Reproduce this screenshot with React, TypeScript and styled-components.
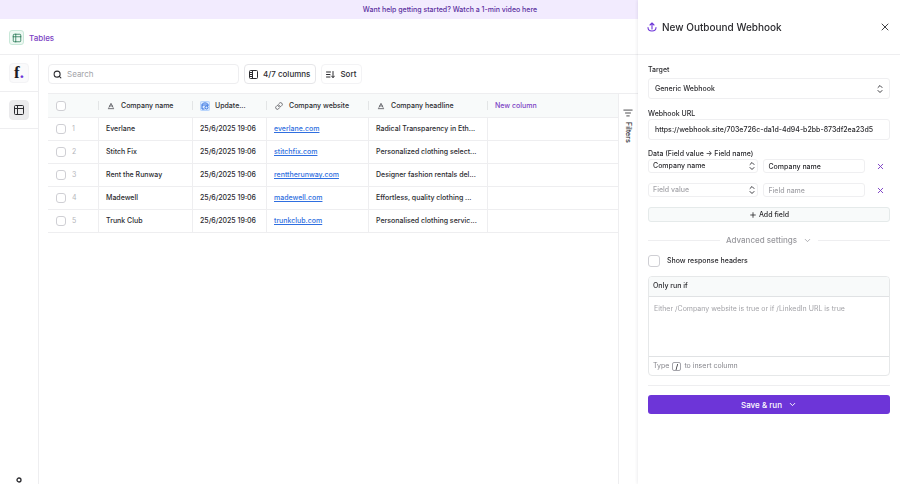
import React, { useState } from "react";
import styled, { createGlobalStyle, css } from "styled-components";
import {
  Baseline,
  ChevronDown,
  Link,
  ListFilter,
  Plus,
  Search,
  Table2,
  X,
} from "lucide-react";

const color = {
  text: "#2b2b2f",
  muted: "#a3a3a8",
  line: "#eeeef0",
  field: "#efeff1",
  tint: "#f8fafa",
  purple: "#7c3fc4",
  brand: "#6d35d8",
  link: "#2f6fe0",
};

const DRAWER = "262px";

const GlobalStyle = createGlobalStyle`
  *, *::before, *::after { box-sizing: border-box; }
  body {
    margin: 0;
    background: #fff;
    color: ${color.text};
    font: 500 7px/10px Inter, "Liberation Sans", sans-serif;
  }
  button, input, select, textarea { font: inherit; color: inherit; margin: 0; }
  button { cursor: pointer; }
  svg { display: block; flex: none; }
`;

const Page = styled.div`
  display: flex;
  flex-direction: column;
  min-height: 100vh;
`;

const Banner = styled.a`
  display: flex;
  align-items: center;
  justify-content: center;
  height: 19px;
  background: #f2ebfe;
  color: #5b2f9e;
  text-decoration: none;
`;

const TopBar = styled.header`
  display: flex;
  align-items: center;
  gap: 5px;
  height: 36px;
  padding: 2px 9px 0;
  border-bottom: 1px solid ${color.line};
`;

const TopTitle = styled.h1`
  margin: 0;
  color: ${color.purple};
  font-size: 8px;
  font-weight: 500;
`;

const GreenBadge = styled.span`
  display: grid;
  place-items: center;
  width: 15px;
  height: 15px;
  border: 1px solid #c9e8d9;
  border-radius: 3px;
  background: #eef9f3;
  color: #2f7d5b;
`;

const Body = styled.div`
  display: flex;
  flex: 1;
  padding-right: ${DRAWER};
`;

const Rail = styled.nav`
  display: flex;
  flex-direction: column;
  flex: none;
  width: 39px;
  border-right: 1px solid ${color.line};
`;

const RailCell = styled.div`
  display: flex;
  align-items: center;
  height: 37px;
  padding-left: 9px;
  border-bottom: 1px solid ${color.line};
`;

const RailButton = styled.button<{ $active?: boolean }>`
  display: grid;
  place-items: center;
  width: 20px;
  height: 20px;
  padding: 0;
  border: 1px solid ${(p) => (p.$active ? "#eaeaec" : "#f3f3f5")};
  border-radius: 4px;
  background: ${(p) => (p.$active ? "#ebebed" : "#fafafb")};
`;

const Logo = styled.span`
  font: 700 17px/16px "Liberation Serif", serif;
  color: #1c1c1f;
  b { color: ${color.brand}; }
`;

const RailFoot = styled.div`
  height: 8px;
  margin-top: auto;
  padding-left: 15px;
  overflow: hidden;
`;

const Main = styled.main`
  flex: 1;
  min-width: 0;
  display: flex;
  flex-direction: column;
  padding: 9px 0 0 9px;
`;

const Toolbar = styled.div`
  display: flex;
  gap: 5px;
  padding-bottom: 9px;
`;

const SearchBox = styled.label`
  display: flex;
  align-items: center;
  gap: 5px;
  width: 191px;
  height: 20px;
  padding: 0 4px;
  border: 1px solid ${color.line};
  border-radius: 4px;
  input {
    flex: 1;
    min-width: 0;
    padding: 0;
    border: 0;
    outline: 0;
    background: none;
    font-size: 8px;
    font-weight: 400;
  }
  input::placeholder { color: ${color.muted}; opacity: 1; }
`;

const ToolButton = styled.button<{ $faint?: boolean }>`
  display: flex;
  align-items: center;
  gap: 5px;
  height: 20px;
  padding: 0 5px 0 4px;
  border: 1px solid ${(p) => (p.$faint ? "#f3f3f5" : "#e6e6e9")};
  border-radius: 4px;
  background: #fff;
  font-size: 8px;
`;

const Workspace = styled.div`
  display: flex;
  flex: 1;
  border-top: 1px solid ${color.line};
`;

const TablePane = styled.div`
  flex: 1;
  min-width: 0;
`;

const Grid = styled.table`
  width: 100%;
  table-layout: fixed;
  border-collapse: separate;
  border-spacing: 0;
  th, td {
    border-bottom: 1px solid ${color.line};
    text-align: left;
    font-weight: 500;
    white-space: nowrap;
  }
  th { height: 24px; padding: 0 8px; background-color: ${color.tint}; }
  td { height: 23px; padding: 0 7px; }
  td:first-child { padding-left: 8px; }
  td + td { border-left: 1px solid ${color.line}; }
`;

const HeadDivided = styled.th`
  background-image: linear-gradient(#e3e5e6, #e3e5e6);
  background-size: 1px 9px;
  background-position: left center;
  background-repeat: no-repeat;
`;

const HeadCell = styled.div`
  display: flex;
  align-items: center;
  gap: 5px;
`;

const HeadIcon = styled.span<{ $blue?: boolean }>`
  display: grid;
  place-items: center;
  width: 10px;
  height: 10px;
  border-radius: 2px;
  color: #55555b;
  ${(p) =>
    p.$blue &&
    css`
      background: #dcebff;
      color: #2f6fe0;
      box-shadow: 0 0 0 1px #b9d5fc inset;
    `}
`;

const NewColumn = styled.button`
  padding: 0;
  border: 0;
  background: none;
  color: ${color.purple};
`;

const RowPick = styled.label`
  display: flex;
  align-items: center;
  gap: 6px;
  color: #b5b5ba;
  font-weight: 400;
`;

const CheckBox = styled.input.attrs({ type: "checkbox" })<{ $large?: boolean }>`
  appearance: none;
  flex: none;
  width: ${(p) => (p.$large ? "12px" : "10px")};
  height: ${(p) => (p.$large ? "12px" : "10px")};
  border: 1px solid #cfcfd4;
  border-radius: 3px;
  background: #fff;
  &:checked { background: ${color.brand}; border-color: ${color.brand}; }
`;

const SiteLink = styled.a`
  color: ${color.link};
`;

const FilterTab = styled.button`
  display: flex;
  flex-direction: column;
  align-items: center;
  gap: 4px;
  width: 20px;
  padding: 14px 2px 0 0;
  border: 0;
  border-left: 1px solid ${color.line};
  background: #fff;
  span { writing-mode: vertical-rl; line-height: 10px; }
`;

const Drawer = styled.aside`
  position: fixed;
  inset: 0 0 0 auto;
  width: ${DRAWER};
  overflow: auto;
  background: #fff;
  box-shadow: -1px 0 3px rgba(20, 20, 40, 0.07);
`;

const DrawerHead = styled.div`
  display: flex;
  align-items: center;
  gap: 5px;
  height: 55px;
  padding: 0 9px;
  border-bottom: 1px solid ${color.line};
  color: ${color.brand};
  h2 {
    flex: 1;
    margin: 0;
    color: ${color.text};
    font-size: 10px;
    font-weight: 500;
  }
`;

const IconButton = styled.button`
  display: grid;
  place-items: center;
  width: 12px;
  height: 12px;
  padding: 0;
  border: 0;
  background: none;
  color: ${color.purple};
`;

const CloseButton = styled(IconButton)`
  color: ${color.text};
`;

const Form = styled.form`
  display: flex;
  flex-direction: column;
  padding: 10px;
`;

const Field = styled.div`
  display: flex;
  flex-direction: column;
  gap: 3px;
  margin-bottom: 10px;
`;

const TightField = styled(Field)`
  gap: 0;
  margin-bottom: 9px;
`;

const inputLook = css<{ $tall?: boolean }>`
  width: 100%;
  min-width: 0;
  height: ${(p) => (p.$tall ? "21px" : "14px")};
  padding: 0 ${(p) => (p.$tall ? "6px" : "4px")};
  border: 1px solid ${color.field};
  border-radius: 3px;
  background: #fff;
  outline: 0;
  &::placeholder { color: ${color.muted}; opacity: 1; }
`;

const TextInput = styled.input<{ $tall?: boolean }>`
  ${inputLook}
`;

const SelectWrap = styled.div<{ $empty?: boolean; $tall?: boolean }>`
  display: grid;
  align-items: center;
  > * { grid-area: 1 / 1; }
  > svg {
    justify-self: end;
    margin-right: ${(p) => (p.$tall ? "7px" : "3px")};
    pointer-events: none;
  }
  select { color: ${(p) => (p.$empty ? color.muted : color.text)}; }
`;

const SelectInput = styled.select<{ $tall?: boolean }>`
  ${inputLook}
  appearance: none;
`;

const Mapping = styled.div`
  display: grid;
  grid-template-columns: 111fr 102fr 20px;
  gap: 5px;
  align-items: center;
  margin-bottom: 10px;
  ${IconButton} { justify-self: center; }
`;

const AddButton = styled.button`
  display: flex;
  align-items: center;
  justify-content: center;
  gap: 2px;
  height: 15px;
  border: 1px solid #e5eaea;
  border-radius: 3px;
  background: ${color.tint};
`;

const Advanced = styled.button`
  display: flex;
  align-items: center;
  gap: 6px;
  margin: 12px 0 8px;
  padding: 0;
  border: 0;
  background: none;
  color: #98989d;
  font-size: 8px;
  line-height: 12px;
  &::before, &::after {
    content: "";
    flex: 1;
    height: 1px;
    background: ${color.line};
  }
`;

const CheckLine = styled.label`
  display: flex;
  align-items: center;
  gap: 7px;
  height: 14px;
`;

const Condition = styled.div`
  margin-top: 8px;
  border: 1px solid #e6e8e9;
  border-radius: 4px;
  overflow: hidden;
  label {
    display: block;
    padding: 4px 4px 5px;
    background: ${color.tint};
  }
  textarea {
    display: block;
    width: 100%;
    height: 61px;
    padding: 7px 5px;
    border: 1px solid #e0e2e4;
    border-width: 1px 0;
    outline: 0;
    resize: none;
    font-weight: 400;
  }
  textarea::placeholder { color: ${color.muted}; opacity: 1; }
`;

const Hint = styled.div`
  display: flex;
  align-items: center;
  gap: 3px;
  height: 18px;
  padding: 0 4px;
  color: #85858b;
  font-weight: 400;
  kbd {
    display: grid;
    place-items: center;
    width: 9px;
    height: 9px;
    border: 1px solid #a4a4aa;
    border-radius: 2px;
    font: inherit;
    font-weight: 600;
    line-height: 7px;
    color: ${color.text};
  }
`;

const Rule = styled.hr`
  width: 100%;
  height: 1px;
  margin: 9px 0;
  border: 0;
  background: ${color.line};
`;

const SaveButton = styled.button`
  display: flex;
  align-items: center;
  justify-content: center;
  gap: 6px;
  height: 19px;
  border: 0;
  border-radius: 3px;
  background: ${color.brand};
  color: #fff;
  font-size: 8px;
`;

const UploadIcon = () => (
  <svg width="10" height="10" viewBox="0 0 20 20" fill="none" stroke="currentColor" strokeWidth="2.2" strokeLinecap="round" strokeLinejoin="round" aria-hidden="true">
    <path d="M10 14V2M6 6l4-4 4 4M2 11c0 4 3 7 8 7s8-3 8-7" />
  </svg>
);

const ColumnsIcon = () => (
  <svg width="9" height="9" viewBox="0 0 18 18" fill="none" stroke="currentColor" strokeWidth="2" aria-hidden="true">
    <rect x="1" y="1" width="16" height="16" rx="2" />
    <path d="M7 1v16M2 5h4M2 9h4M2 13h4" />
  </svg>
);

const SortIcon = () => (
  <svg width="9" height="9" viewBox="0 0 18 18" fill="none" stroke="currentColor" strokeWidth="2" strokeLinecap="round" strokeLinejoin="round" aria-hidden="true">
    <path d="M1 4h8M1 9h7M1 14h7M14 3v12M11 12l3 3 3-3" />
  </svg>
);

const UpDownIcon = () => (
  <svg width="6" height="10" viewBox="0 0 12 20" fill="none" stroke="#3d3d42" strokeWidth="2" strokeLinecap="round" strokeLinejoin="round" aria-hidden="true">
    <path d="M2 7l4-4 4 4M2 13l4 4 4-4" />
  </svg>
);

const DateIcon = () => (
  <svg width="8" height="8" viewBox="0 0 16 16" fill="none" stroke="currentColor" strokeWidth="2" strokeLinejoin="round" aria-hidden="true">
    <path d="M7 14H2V5l3-3h6l3 3v3M2 6h12" />
    <circle cx="11" cy="11" r="3" />
  </svg>
);

const rows = [
  ["Everlane", "everlane.com", "Radical Transparency in Eth..."],
  ["Stitch Fix", "stitchfix.com", "Personalized clothing select..."],
  ["Rent the Runway", "renttherunway.com", "Designer fashion rentals del..."],
  ["Madewell", "madewell.com", "Effortless, quality clothing ..."],
  ["Trunk Club", "trunkclub.com", "Personalised clothing servic..."],
];

export default function App() {
  const [mappings, setMappings] = useState([
    { value: "Company name", name: "Company name" },
    { value: "", name: "" },
  ]);
  const update = (at: number, part: Partial<{ value: string; name: string }>) =>
    setMappings(mappings.map((m, i) => (i === at ? { ...m, ...part } : m)));

  return (
    <Page>
      <GlobalStyle />
      <Banner href="#video">Want help getting started? Watch a 1-min video here</Banner>
      <TopBar>
        <GreenBadge><Table2 size={10} /></GreenBadge>
        <TopTitle>Tables</TopTitle>
      </TopBar>
      <Body>
        <Rail>
          <RailCell>
            <RailButton aria-label="Home"><Logo>f<b>.</b></Logo></RailButton>
          </RailCell>
          <RailCell>
            <RailButton $active aria-label="Tables"><Table2 size={12} /></RailButton>
          </RailCell>
          <RailFoot>
            <svg width="8" height="8" viewBox="0 0 8 8" fill="none" stroke="currentColor" aria-hidden="true">
              <circle cx="4" cy="4" r="2" strokeWidth="1.3" />
            </svg>
          </RailFoot>
        </Rail>
        <Main>
          <Toolbar>
            <SearchBox>
              <Search size={9} strokeWidth={2.8} />
              <input type="search" placeholder="Search" aria-label="Search" />
            </SearchBox>
            <ToolButton><ColumnsIcon />4/7 columns</ToolButton>
            <ToolButton $faint><SortIcon />Sort</ToolButton>
          </Toolbar>
          <Workspace>
            <TablePane>
              <Grid>
                <colgroup>
                  <col width="50" />
                  <col width="94" />
                  <col width="74" />
                  <col width="102" />
                  <col width="119" />
                  <col />
                </colgroup>
                <thead>
                  <tr>
                    <th><RowPick><CheckBox aria-label="Select all rows" /></RowPick></th>
                    <HeadDivided><HeadCell><HeadIcon><Baseline size={8} strokeWidth={2.5} /></HeadIcon>Company name</HeadCell></HeadDivided>
                    <HeadDivided><HeadCell><HeadIcon $blue><DateIcon /></HeadIcon>Update...</HeadCell></HeadDivided>
                    <HeadDivided><HeadCell><HeadIcon><Link size={8} strokeWidth={2.5} /></HeadIcon>Company website</HeadCell></HeadDivided>
                    <HeadDivided><HeadCell><HeadIcon><Baseline size={8} strokeWidth={2.5} /></HeadIcon>Company headline</HeadCell></HeadDivided>
                    <HeadDivided><NewColumn>New column</NewColumn></HeadDivided>
                  </tr>
                </thead>
                <tbody>
                  {rows.map(([name, site, headline], i) => (
                    <tr key={name}>
                      <td><RowPick><CheckBox />{i + 1}</RowPick></td>
                      <td>{name}</td>
                      <td>25/6/2025 19:06</td>
                      <td><SiteLink href={"#" + site}>{site}</SiteLink></td>
                      <td>{headline}</td>
                      <td />
                    </tr>
                  ))}
                </tbody>
              </Grid>
            </TablePane>
            <FilterTab><ListFilter size={10} /><span>Filters</span></FilterTab>
          </Workspace>
        </Main>
      </Body>
      <Drawer aria-label="New Outbound Webhook">
        <DrawerHead>
          <UploadIcon />
          <h2>New Outbound Webhook</h2>
          <CloseButton aria-label="Close"><X size={12} strokeWidth={1.8} /></CloseButton>
        </DrawerHead>
        <Form onSubmit={(e) => e.preventDefault()}>
          <Field>
            <label htmlFor="target">Target</label>
            <SelectWrap $tall>
              <SelectInput id="target" $tall><option>Generic Webhook</option></SelectInput>
              <UpDownIcon />
            </SelectWrap>
          </Field>
          <TightField>
            <label htmlFor="url">Webhook URL</label>
            <TextInput id="url" $tall defaultValue="https://webhook.site/703e726c-da1d-4d94-b2bb-873df2ea23d5" />
          </TightField>
          <span>Data (Field value → Field name)</span>
          {mappings.map((m, i) => (
            <Mapping key={i}>
              <SelectWrap $empty={!m.value}>
                <SelectInput aria-label="Field value" value={m.value} onChange={(e) => update(i, { value: e.target.value })}>
                  <option value="">Field value</option>
                  <option>Company name</option>
                </SelectInput>
                <UpDownIcon />
              </SelectWrap>
              <TextInput aria-label="Field name" placeholder="Field name" value={m.name} onChange={(e) => update(i, { name: e.target.value })} />
              <IconButton type="button" aria-label="Remove field" onClick={() => setMappings(mappings.filter((_, j) => j !== i))}>
                <X size={9} strokeWidth={2.5} />
              </IconButton>
            </Mapping>
          ))}
          <AddButton type="button" onClick={() => setMappings([...mappings, { value: "", name: "" }])}>
            <Plus size={8} strokeWidth={2.5} />Add field
          </AddButton>
          <Advanced type="button">Advanced settings<ChevronDown size={9} /></Advanced>
          <CheckLine><CheckBox $large />Show response headers</CheckLine>
          <Condition>
            <label htmlFor="condition">Only run if</label>
            <textarea id="condition" placeholder="Either /Company website is true or if /LinkedIn URL is true" />
            <Hint>Type <kbd>/</kbd> to insert column</Hint>
          </Condition>
          <Rule />
          <SaveButton type="submit">Save &amp; run<ChevronDown size={9} strokeWidth={2.5} /></SaveButton>
        </Form>
      </Drawer>
    </Page>
  );
}
